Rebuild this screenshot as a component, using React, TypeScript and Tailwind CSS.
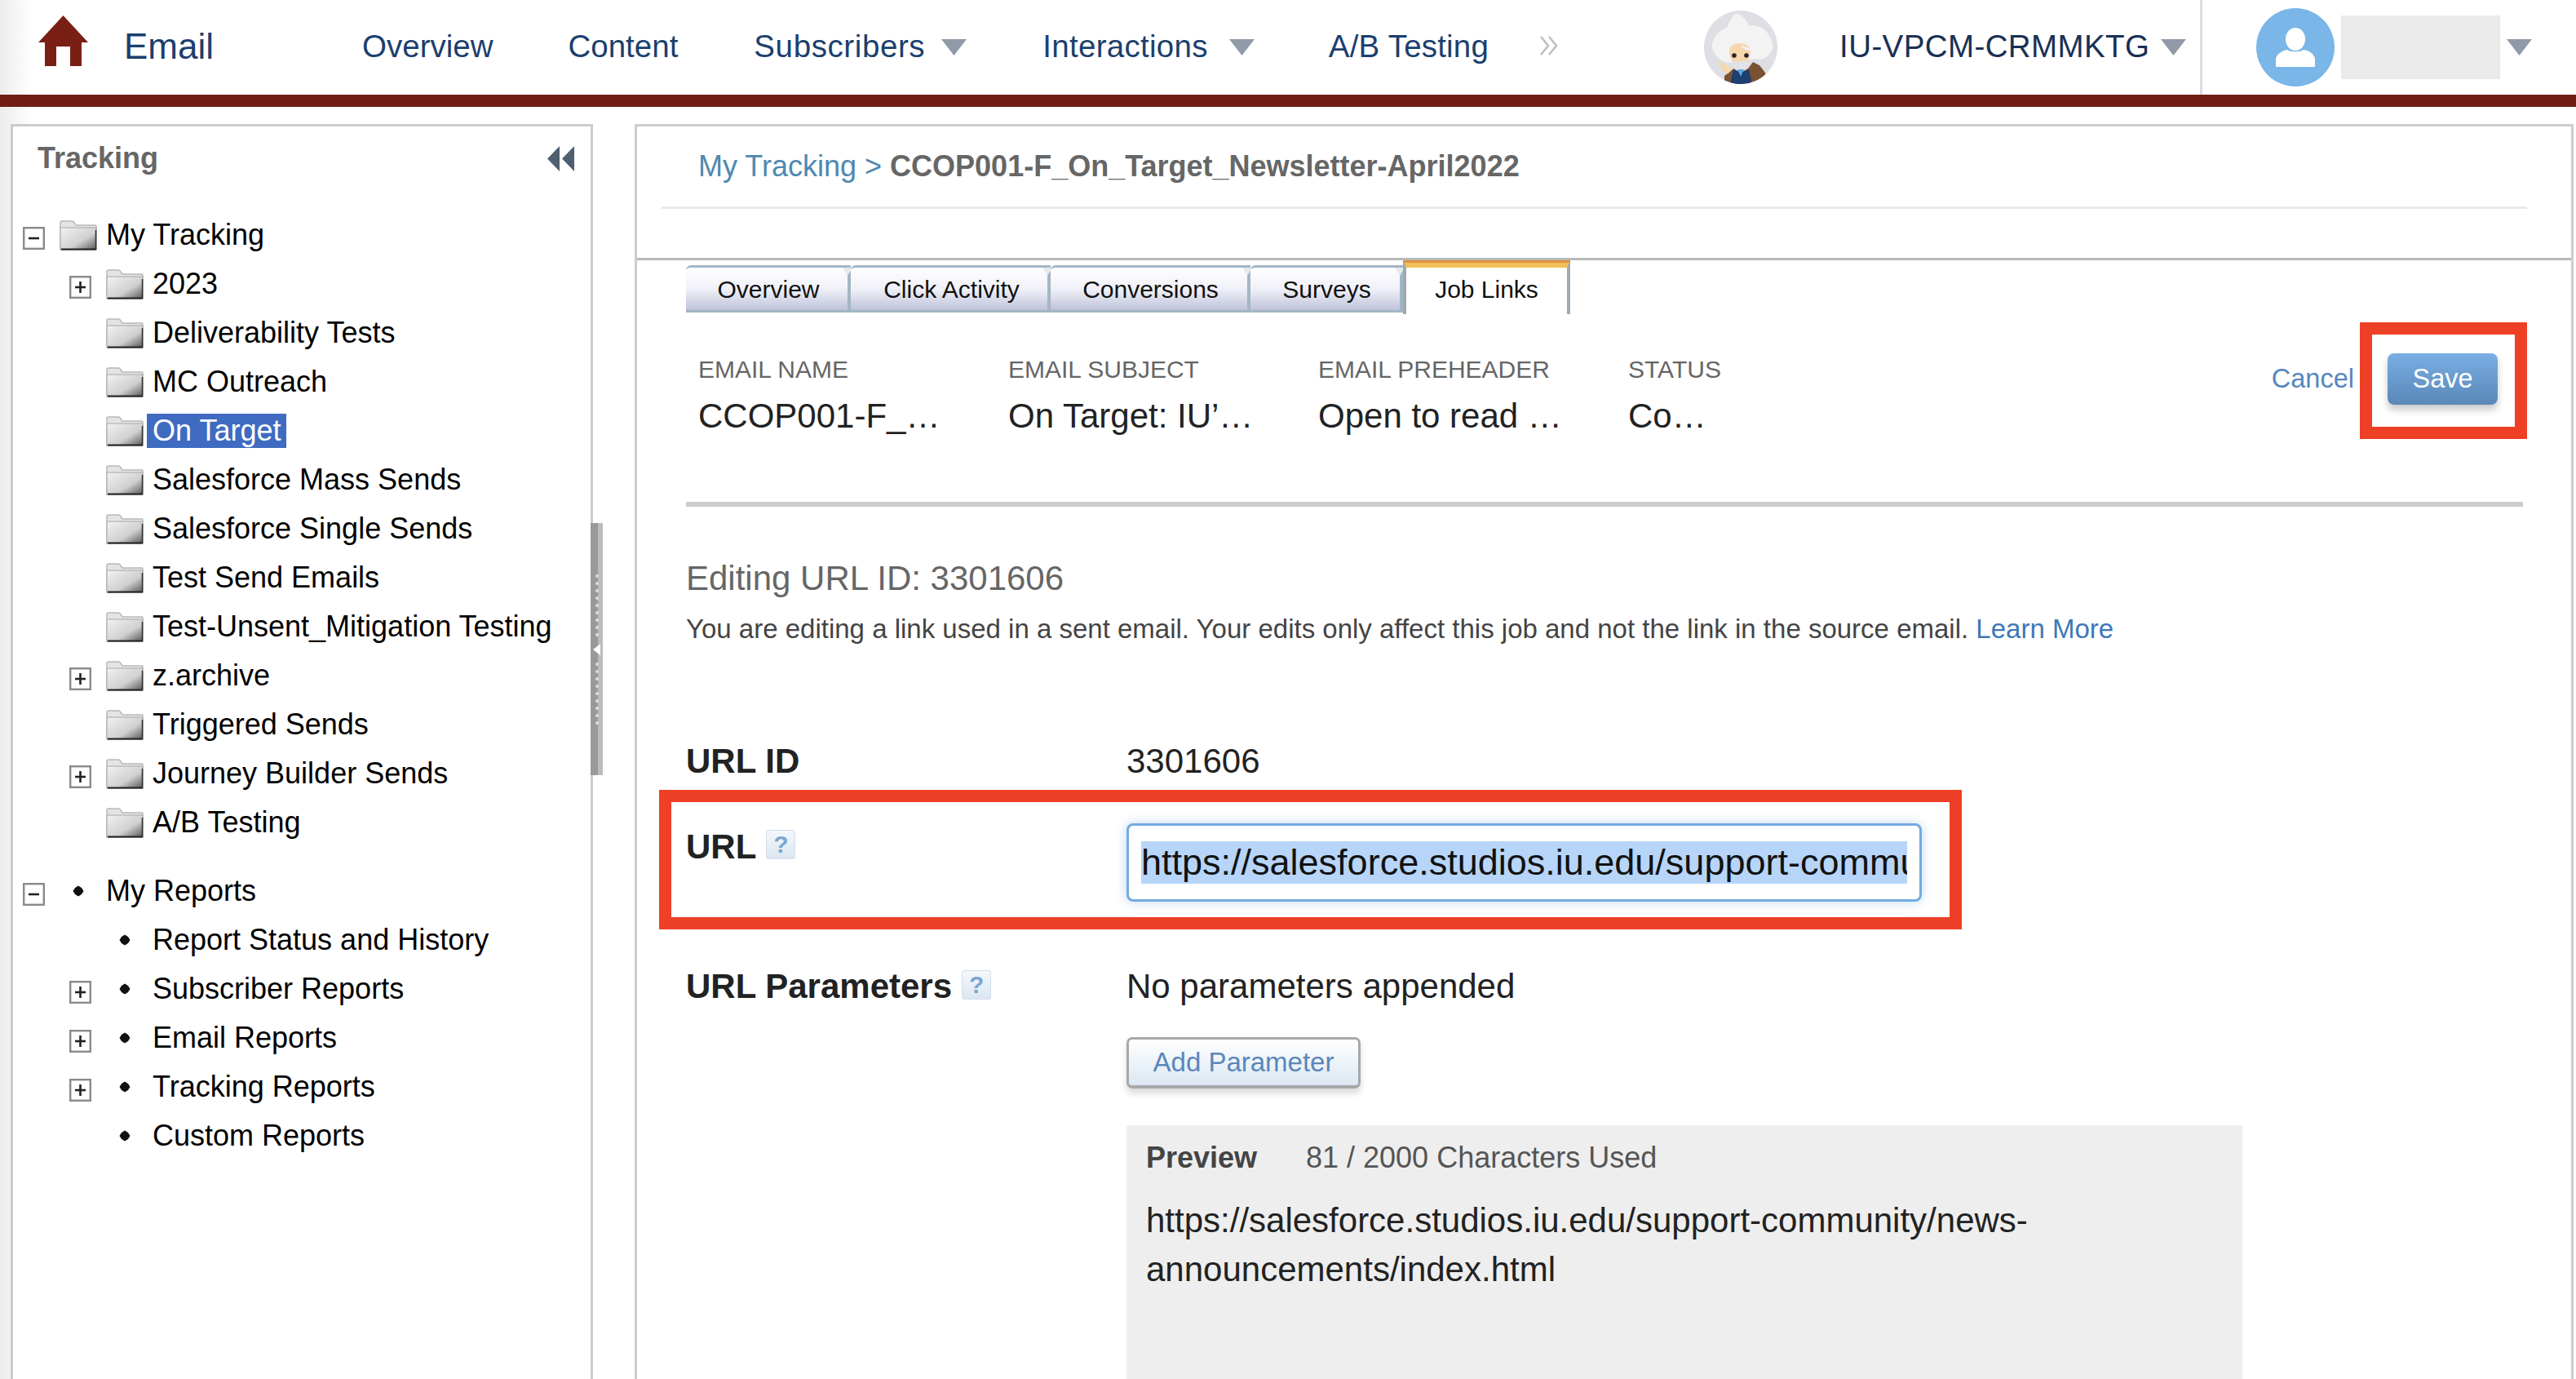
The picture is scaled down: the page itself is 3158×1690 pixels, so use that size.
import React from "react";

const Tri = ({ className = "" }: { className?: string }) => (
  <svg width="31" height="20" viewBox="0 0 31 20" className={className}>
    <path d="M0 0H31L15.5 20Z" fill="#919aa8" />
  </svg>
);

const Folder = () => (
  <svg width="46" height="37" viewBox="0 0 46 37" className="block">
    <path d="M1 36V3q0-2 2-2h12q2 0 3 2l2 3h24q1 0 1 1v29Z" fill="#e4e4e4" stroke="#b8b8b8" strokeWidth="1.5" />
    <path d="M1 9H45V36H1Z" fill="url(#folderFill)" stroke="#a8a8a8" strokeWidth="1" />
    <path d="M2 35.5H45" stroke="#222" strokeWidth="2" />
    <path d="M44.5 12V36" stroke="#333" strokeWidth="1.5" />
  </svg>
);

const Box = ({ open }: { open?: boolean }) => (
  <svg width="27" height="28" viewBox="0 0 27 28" className="block mt-[8px]">
    <rect x="1.2" y="1.2" width="24.6" height="25.6" fill="#fff" stroke="#8a8a8a" strokeWidth="2.4" />
    <path d="M7 14H20" stroke="#222" strokeWidth="2.6" />
    {!open && <path d="M13.5 7V21" stroke="#222" strokeWidth="2.6" />}
  </svg>
);

const Bullet = () => (
  <svg width="14" height="14" viewBox="0 0 14 14" className="block">
    <path d="M7 0.5L11 3l2.5 4L11 11l-4 2.5L3 11 .5 7 3 3Z" fill="#111" />
  </svg>
);

type Row = { label: string; depth: 0 | 1; box?: "open" | "closed"; kind: "folder" | "bullet"; selected?: boolean };

const tracking: Row[] = [
  { label: "My Tracking", depth: 0, box: "open", kind: "folder" },
  { label: "2023", depth: 1, box: "closed", kind: "folder" },
  { label: "Deliverability Tests", depth: 1, kind: "folder" },
  { label: "MC Outreach", depth: 1, kind: "folder" },
  { label: "On Target", depth: 1, kind: "folder", selected: true },
  { label: "Salesforce Mass Sends", depth: 1, kind: "folder" },
  { label: "Salesforce Single Sends", depth: 1, kind: "folder" },
  { label: "Test Send Emails", depth: 1, kind: "folder" },
  { label: "Test-Unsent_Mitigation Testing", depth: 1, kind: "folder" },
  { label: "z.archive", depth: 1, box: "closed", kind: "folder" },
  { label: "Triggered Sends", depth: 1, kind: "folder" },
  { label: "Journey Builder Sends", depth: 1, box: "closed", kind: "folder" },
  { label: "A/B Testing", depth: 1, kind: "folder" },
];

const reports: Row[] = [
  { label: "My Reports", depth: 0, box: "open", kind: "bullet" },
  { label: "Report Status and History", depth: 1, kind: "bullet" },
  { label: "Subscriber Reports", depth: 1, box: "closed", kind: "bullet" },
  { label: "Email Reports", depth: 1, box: "closed", kind: "bullet" },
  { label: "Tracking Reports", depth: 1, box: "closed", kind: "bullet" },
  { label: "Custom Reports", depth: 1, kind: "bullet" },
];

const TreeRow = ({ row }: { row: Row }) => (
  <div className={`flex items-center h-[60px] whitespace-nowrap text-[36px] text-black ${row.depth === 0 ? "pl-[12px]" : "pl-[69px]"}`}>
    <div className="w-[27px] shrink-0">{row.box && <Box open={row.box === "open"} />}</div>
    <div className="w-[46px] ml-[18px] shrink-0 flex justify-center">
      {row.kind === "folder" ? <Folder /> : <Bullet />}
    </div>
    {row.selected ? (
      <span className="ml-[4px] px-[7px] h-[42px] leading-[42px] bg-[#3f6bc0] text-white">{row.label}</span>
    ) : (
      <span className="ml-[11px]">{row.label}</span>
    )}
  </div>
);

const Help = () => (
  <span className="flex items-center justify-center w-[36px] h-[36px] border border-[#d3dee8] rounded-[3px] bg-gradient-to-b from-[#f4f8fb] to-[#dbe7f1] text-[#7ba6d2] text-[30px] leading-none">
    ?
  </span>
);

const Tab = ({ label, width, textClass = "pl-[4px]" }: { label: string; width: string; textClass?: string }) => (
  <div className={`relative ${width} ${textClass} h-[58px] mb-[2px] flex items-center justify-center text-[30px] text-[#111] border-t-[3px] border-r-[4px] border-b-[3px] border-[#a3b6c4] rounded-tl-[6px] bg-gradient-to-b from-white via-[#f0f1f8] to-[#bfc3da]`}>
    {label}
    <div className="absolute top-0 right-[-6px] w-0 h-0 border-l-[6px] border-r-[6px] border-t-[10px] border-l-transparent border-r-transparent border-t-[#e4ebf0]" />
  </div>
);

const Meta = ({ label, value }: { label: string; value: string }) => (
  <div className="w-[380px] shrink-0 whitespace-nowrap">
    <div className="text-[30px] leading-[36px] text-[#666]">{label}</div>
    <div className="mt-[15px] text-[42px] leading-[48px] text-[#222]">{value}</div>
  </div>
);

const NavItem = ({ label, className = "" }: { label: string; className?: string }) => (
  <span className={`text-[38.5px] text-[#1b3f6e] leading-none whitespace-nowrap ${className}`}>{label}</span>
);

const Avatar = () => (
  <svg width="90" height="90" viewBox="0 0 90 90" className="block ml-[179px] shrink-0">
    <defs>
      <clipPath id="avatarClip">
        <circle cx="45" cy="45" r="45" />
      </clipPath>
    </defs>
    <g clipPath="url(#avatarClip)">
      <rect width="90" height="90" fill="#dddfe4" />
      <path d="M10 40C13 30 20 23 28 21c3-9 7-15 12-18 7 3 13 9 15 16 9-3 20 2 25 12 5 7 6 15 1 21-4 6-11 9-18 7l-30 5c-8 0-15-4-19-10-3-4-5-9-4-14Z" fill="#f3f3f3" />
      <path d="M31 50c0-7 6-10 13-10s12 3 13 10c0 9-5 17-13 17s-13-8-13-17Z" fill="#f8d6ac" />
      <path d="M44 42c4 2 10 2 15 8l-8-2c-3-2-5-4-7-6Z" fill="#f3f3f3" />
      <circle cx="37" cy="55" r="2.8" fill="#22222a" />
      <circle cx="52" cy="55" r="2.8" fill="#22222a" />
      <path d="M35 64c3-3 7-3 10-1 3-2 7-2 10 1 1 5-5 10-10 11-5-1-11-6-10-11Z" fill="#e2e3e6" />
      <path d="M25 90V80l8-6 3-3 9 5 9-5 6-8 8 4 7 9 2 14Z" fill="#7a5233" />
      <path d="M32 90l4-18 9 4 10-4 4 18Z" fill="#1d3f72" />
      <path d="M41 72l4 9 4-9Z" fill="#58a6e0" />
      <path d="M19 62l15 9-4 6c-6 0-10-5-11-15Z" fill="#f8d6ac" />
    </g>
  </svg>
);

export default function App() {
  return (
    <div className="w-[3158px] h-[1690px] overflow-hidden font-['Liberation_Sans',Arial,sans-serif] bg-[linear-gradient(90deg,#ececec,#ffffff_40px)]">
      {/* Top navigation */}
      <header className="h-[116px] flex items-center">
        <svg width="61" height="62" viewBox="0 0 61 62" className="ml-[47px] mb-[16px] shrink-0">
          <path d="M30.5 0L61 33H53V62H39V38H22V62H8V33H0Z" fill="#7a1f14" />
        </svg>
        <span className="ml-[44px] mb-[2px] text-[44px] leading-none text-[#1b3f6e]">Email</span>
        <NavItem label="Overview" className="ml-[182px] mb-[2px]" />
        <NavItem label="Content" className="ml-[92px] mb-[2px]" />
        <NavItem label="Subscribers" className="ml-[93px] mb-[2px] tracking-[0.6px]" />
        <Tri className="ml-[20px] shrink-0" />
        <NavItem label="Interactions" className="ml-[93px] mb-[2px] tracking-[0.3px]" />
        <Tri className="ml-[26px] shrink-0" />
        <NavItem label="A/B Testing" className="ml-[91px] mb-[2px] tracking-[0.2px]" />
        <svg width="23" height="26" viewBox="0 0 23 26" className="ml-[62px] mb-[4px] shrink-0">
          <path d="M2 2l9 11-9 11M12 2l9 11-9 11" fill="none" stroke="#bdbdbd" strokeWidth="2.5" />
        </svg>
        <Avatar />
        <span className="ml-[76px] mb-[2px] text-[38.5px] leading-none tracking-[0.4px] text-[#1a3055] whitespace-nowrap">IU-VPCM-CRMMKTG</span>
        <Tri className="ml-[14px] shrink-0" />
        <div className="ml-[17px] w-[3px] h-[116px] bg-[#d8dde6] shrink-0" />
        <svg width="96" height="96" viewBox="0 0 96 96" className="ml-[66px] shrink-0">
          <circle cx="48" cy="48" r="48" fill="#7ab6e8" />
          <ellipse cx="48" cy="38" rx="12" ry="14" fill="#fff" />
          <path d="M24 72V62c1-6 8-10 14-11 3 3 17 3 20 0 7 1 13 5 14 11v10Z" fill="#fff" />
        </svg>
        <div className="ml-[8px] w-[195px] h-[78px] bg-[#eaeaea] shrink-0" />
        <Tri className="ml-[8px] shrink-0" />
      </header>
      <div className="h-[15px] bg-[#711d13]" />

      {/* Body */}
      <div className="flex pl-[13px] pt-[21px] h-[1559px]">
        {/* Sidebar */}
        <aside className="relative w-[714px] shrink-0 bg-white border-l-[3px] border-t-[3px] border-r-[3px] border-[#cccccc]">
          <div className="h-[78px] flex items-center justify-between pl-[30px] pr-[20px]">
            <span className="text-[36px] font-bold text-[#666]">Tracking</span>
            <svg width="33" height="31" viewBox="0 0 33 31">
              <path d="M15 0V31L0 15.5Z M33 0V31L18 15.5Z" fill="#4e6070" />
            </svg>
          </div>
          <div className="mt-[25px]">
            {tracking.map((r) => (
              <TreeRow key={r.label} row={r} />
            ))}
          </div>
          <div className="mt-[24px]">
            {reports.map((r) => (
              <TreeRow key={r.label} row={r} />
            ))}
          </div>
          {/* resize handle */}
          <div className="absolute top-[486px] right-[-15px] w-[15px] h-[309px] flex flex-col items-center justify-center gap-[5px] bg-[linear-gradient(90deg,#999999_60%,#bcbcbc_60%)]">
            {[0, 1, 2, 3, 4, 5, 6, 7, 8].map((i) => (
              <div key={i} className="w-[4px] h-[4px] rounded-full bg-[#dddddd]" />
            ))}
            <div className="my-[4px] w-0 h-0 border-y-[7px] border-y-transparent border-r-[9px] border-r-white" />
            {[0, 1, 2, 3, 4, 5, 6, 7, 8].map((i) => (
              <div key={i} className="w-[4px] h-[4px] rounded-full bg-[#dddddd]" />
            ))}
          </div>
        </aside>

        {/* Main */}
        <main className="ml-[51px] w-[2377px] shrink-0 bg-white border-l-[3px] border-t-[3px] border-r-[3px] border-[#cccccc]">
          <div className="h-[161px]">
            <div className="h-[98px] flex items-center pl-[75px] text-[36px] whitespace-nowrap">
              <span className="text-[#4f88b0]">My Tracking &gt;</span>
              <span className="ml-[10px] font-bold text-[#666]">CCOP001-F_On_Target_Newsletter-April2022</span>
            </div>
            <div className="ml-[30px] w-[2287px] h-[3px] bg-[#eaeaea]" />
          </div>
          <div className="h-[3px] bg-[#b9b9b9]" />

          {/* Tabs */}
          <div className="flex items-end pl-[60px]">
            <Tab label="Overview" width="w-[202px]" />
            <Tab label="Click Activity" width="w-[245px]" textClass="pl-[6px]" />
            <Tab label="Conversions" width="w-[245px]" />
            <Tab label="Surveys" width="w-[187px]" />
            <div className="relative w-[205px] h-[66px] pb-[4px] flex items-center justify-center text-[30px] text-[#111] bg-white border-x-[4px] border-[#a0aab0] border-t-[9px] border-t-[#f2bf5a]">
              Job Links
              <div className="absolute top-[-9px] left-[-4px] right-[-4px] h-[3px] bg-[#e0933f]" />
            </div>
          </div>

          {/* Meta row */}
          <div className="flex items-start mt-[10px] pl-[75px] pr-[54px]">
            <div className="flex pt-[40px]">
              <Meta label="EMAIL NAME" value="CCOP001-F_…" />
              <Meta label="EMAIL SUBJECT" value="On Target: IU’…" />
              <Meta label="EMAIL PREHEADER" value="Open to read …" />
              <Meta label="STATUS" value="Co…" />
            </div>
            <a className="ml-auto mr-[7px] mt-[49px] text-[32.5px] leading-[40px] text-[#5587bd]">Cancel</a>
            <div className="w-[205px] h-[143px] border-[15px] border-[#ee4026] pt-[23px] pl-[19px] shrink-0">
              <button className="w-[135px] h-[63px] rounded-[8px] bg-gradient-to-b from-[#7aaee4] to-[#5a88b8] text-white text-[32.5px] shadow-[0_6px_10px_rgba(0,0,0,0.22)]">
                Save
              </button>
            </div>
          </div>

          <div className="ml-[60px] mt-[77px] w-[2252px] h-[6px] bg-[#cccccc]" />

          <div className="pl-[60px]">
            <div className="mt-[63px] text-[42px] leading-[50px] text-[#666]">Editing URL ID: 3301606</div>
            <div className="mt-[17px] text-[33px] leading-[40px] text-[#444] whitespace-nowrap">
              You are editing a link used in a sent email. Your edits only affect this job and not the link in the source email.{" "}
              <a className="text-[#3d78b8]">Learn More</a>
            </div>
            <div className="mt-[117px] flex text-[42px] leading-[50px] text-[#222]">
              <div className="w-[540px] font-bold">URL ID</div>
              <div>3301606</div>
            </div>
          </div>

          {/* URL row (annotated) */}
          <div className="mt-[10px] ml-[27px] w-[1597px] h-[171px] border-[15px] border-[#ee4026] flex pl-[18px] pt-[26px]">
            <div className="w-[540px] shrink-0 flex items-start gap-[12px] pt-[4px] text-[42px] leading-[50px] font-bold text-[#222]">
              <span>URL</span>
              <span className="mt-[4px]"><Help /></span>
            </div>
            <div className="w-[975px] h-[96px] shrink-0 rounded-[8px] border-[3px] border-[#74abe2] shadow-[0_0_14px_rgba(111,168,220,0.45)] bg-white px-[15px] flex items-center overflow-hidden">
              <div className="overflow-hidden whitespace-nowrap w-full">
                <span className="inline-block bg-[#b7d5f8] text-[45px] leading-[52px] text-[#111]">
                  https://salesforce.studios.iu.edu/support-community/news-announcements/index.html
                </span>
              </div>
            </div>
          </div>

          <div className="pl-[60px]">
            <div className="mt-[45px] flex text-[42px] leading-[50px] text-[#222]">
              <div className="w-[540px] flex items-start gap-[12px] font-bold">
                <span>URL Parameters</span>
                <span className="mt-[5px]"><Help /></span>
              </div>
              <div>No parameters appended</div>
            </div>
            <div className="ml-[540px] mt-[37px]">
              <button className="block w-[287px] h-[63px] rounded-[7px] border-[3px] border-b-[4px] border-[#a8a8a8] bg-gradient-to-b from-white to-[#dbe8f3] text-[33px] text-[#5a87bb] shadow-[0_6px_8px_rgba(0,0,0,0.15)]">
                Add Parameter
              </button>
              <div className="mt-[45px] w-[1368px] h-[320px] bg-[#eeeeee] pl-[24px] pt-[20px]">
                <div className="flex text-[36px] leading-[40px] text-[#555] whitespace-nowrap">
                  <span className="font-bold text-[#444] w-[196px]">Preview</span>
                  <span>81 / 2000 Characters Used</span>
                </div>
                <div className="mt-[27px] text-[42px] leading-[60px] text-[#222] whitespace-nowrap">
                  https://salesforce.studios.iu.edu/support-community/news-
                  <br />
                  announcements/index.html
                </div>
              </div>
            </div>
          </div>
        </main>
      </div>

      <svg width="0" height="0" className="absolute">
        <defs>
          <linearGradient id="folderFill" x1="0" y1="0" x2="1" y2="1">
            <stop offset="0" stopColor="#f2f2f2" />
            <stop offset="0.6" stopColor="#d0d0d0" />
            <stop offset="1" stopColor="#555" />
          </linearGradient>
        </defs>
      </svg>
    </div>
  );
}
